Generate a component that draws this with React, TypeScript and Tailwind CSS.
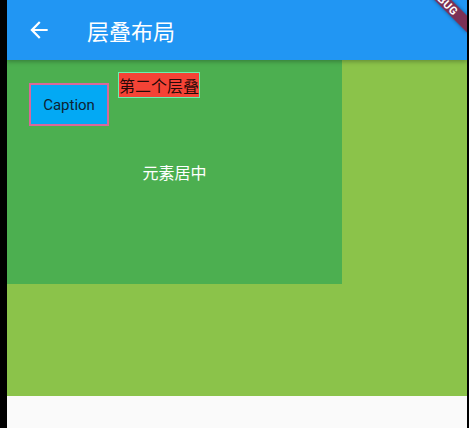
import React from "react";

export default function App() {
  return (
    <div className="flex h-[428px] w-[469px] bg-black font-['Roboto','Noto_Sans_CJK_SC',sans-serif]">
      <div className="relative ml-[7px] flex h-full w-[460px] flex-col overflow-hidden bg-[#FAFAFA]">
        {/* App bar */}
        <div className="relative z-10 flex h-[60px] shrink-0 items-center bg-[#2196F3] shadow-[0_2px_4px_rgba(0,0,0,0.25)]">
          <div className="flex w-[80px] items-center pl-[19px]">
            <svg width="26" height="26" viewBox="0 0 24 24" fill="white">
              <path d="M20 11H7.83l5.59-5.59L12 4l-8 8 8 8 1.41-1.41L7.83 13H20v-2z" />
            </svg>
          </div>
          <div className="font-['Noto_Sans_CJK_SC',sans-serif] text-[22px] text-white">层叠布局</div>
        </div>

        {/* Body */}
        <div className="h-[336px] shrink-0 bg-[#8BC34A]">
          <div className="relative flex h-[224px] w-[335px] items-center justify-center bg-[#4CAF50]">
            <span className="font-['Noto_Sans_CJK_SC',sans-serif] text-[16px] text-white">元素居中</span>
            <div className="absolute left-[22px] top-[23px] flex h-[43px] w-[80px] items-center justify-center border-2 border-[#D9689A] bg-[#03A9F4] pt-[1px] font-['Roboto',sans-serif] text-[15px] text-[#0d2333]">
              Caption
            </div>
            <div className="absolute left-[111px] top-[12px] flex h-[26px] w-[82px] items-center justify-center border border-[#69F0AE] bg-[#F44336] font-['Noto_Sans_CJK_SC',sans-serif] text-[16px] leading-none text-black/[0.87]">
              第二个层叠
            </div>
          </div>
        </div>

        {/* Debug banner */}
        <div className="absolute left-[396px] top-[-6px] z-20 flex h-[12px] w-[80px] rotate-45 items-center justify-center bg-[rgba(150,20,40,0.78)] font-['Roboto',sans-serif] text-[11px] font-bold leading-none tracking-[0.5px] text-white shadow-[0_0_4px_rgba(0,0,0,0.4)]">
          DEBUG
        </div>
      </div>
    </div>
  );
}
